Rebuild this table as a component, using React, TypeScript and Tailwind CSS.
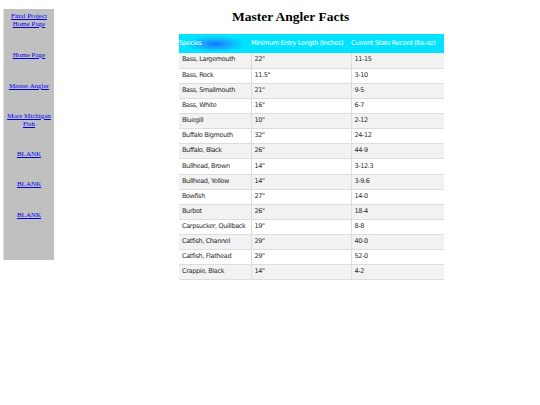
import React from "react";

const rows: [string, string, string][] = [
  ["Bass, Largemouth", "22\"", "11-15"],
  ["Bass, Rock", "11.5\"", "3-10"],
  ["Bass, Smallmouth", "21\"", "9-5"],
  ["Bass, White", "16\"", "6-7"],
  ["Bluegill", "10\"", "2-12"],
  ["Buffalo Bigmouth", "32\"", "24-12"],
  ["Buffalo, Black", "26\"", "44-9"],
  ["Bullhead, Brown", "14\"", "3-12.3"],
  ["Bullhead, Yellow", "14\"", "3-9.6"],
  ["Bowfish", "27\"", "14-0"],
  ["Burbot", "26\"", "18-4"],
  ["Carpsucker, Quillback", "19\"", "8-8"],
  ["Catfish, Channel", "29\"", "40-0"],
  ["Catfish, Flathead", "29\"", "52-0"],
  ["Crappie, Black", "14\"", "4-2"],
];

export default function App() {
  return (
    <div className="w-[540px] h-[405px] bg-white flex items-start" style={{ fontFamily: '"Liberation Serif", serif' }}>
      <div className="ml-[3px] mt-[9px] w-[51px] h-[251px] bg-[#c0c0c0] border-l border-[#e0e0e0] flex flex-col items-center text-[7px] leading-[8px] text-center pt-[3px]">
        <a className="text-[#0000ee] underline">Final Project<br />Home Page</a>
        <a className="text-[#0000ee] underline mt-[23px]">Home Page</a>
        <a className="text-[#0000ee] underline mt-[23px]">Master Angler</a>
        <a className="text-[#0000ee] underline mt-[22px]">More Michigan<br />Fish</a>
        <a className="text-[#0000ee] underline mt-[22px]">BLANK</a>
        <a className="text-[#0000ee] underline mt-[22px]">BLANK</a>
        <a className="text-[#0000ee] underline mt-[23px]">BLANK</a>
      </div>
      <div className="ml-[125px] w-[265px] flex flex-col">
        <h1 className="font-bold text-[13.5px] leading-[16px] mt-[9px] ml-[53px] text-black whitespace-nowrap">Master Angler Facts</h1>
        <table className="mt-[9px] w-[265px] border-collapse text-[6.5px] text-[#2a2a2a] table-fixed" style={{ fontFamily: '"DejaVu Sans", sans-serif' }}>
          <thead>
            <tr className="h-[19px] text-white" style={{ background: "radial-gradient(ellipse 30px 8px at 36px 10px, #0a78ff 0%, #1a9cff 35%, rgba(0,226,255,0) 100%), linear-gradient(#00e2ff, #00e2ff)" }}>
              <th className="text-left font-normal w-[72px] p-0 tracking-[-0.35px] whitespace-nowrap">Species</th>
              <th className="text-left font-normal w-[100px] p-0 tracking-[-0.35px] whitespace-nowrap">Minimum Entry Length (Inches)</th>
              <th className="text-left font-normal p-0 tracking-[-0.35px] whitespace-nowrap">Current State Record (lbs-oz)</th>
            </tr>
          </thead>
          <tbody>
            {rows.map((r, i) => (
              <tr key={i} className={`h-[15.13px] ${i % 2 === 0 ? "bg-[#f2f2f2]" : "bg-white"} border-b border-[#dddddd]`}>
                <td className="pl-[3px] py-0 border-r border-[#dddddd] tracking-[-0.35px] whitespace-nowrap">{r[0]}</td>
                <td className="pl-[3px] py-0 border-r border-[#dddddd] tracking-[-0.35px]">{r[1]}</td>
                <td className="pl-[3px] py-0 tracking-[-0.35px]">{r[2]}</td>
              </tr>
            ))}
          </tbody>
        </table>
      </div>
    </div>
  );
}
